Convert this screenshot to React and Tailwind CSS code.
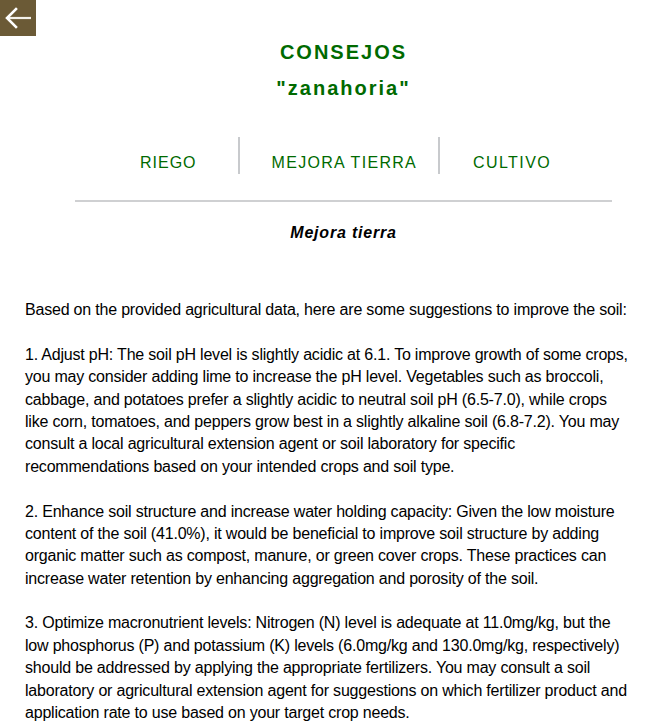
import React from "react";

const advice = `Based on the provided agricultural data, here are some suggestions to improve the soil:

1. Adjust pH: The soil pH level is slightly acidic at 6.1. To improve growth of some crops, you may consider adding lime to increase the pH level. Vegetables such as broccoli, cabbage, and potatoes prefer a slightly acidic to neutral soil pH (6.5-7.0), while crops like corn, tomatoes, and peppers grow best in a slightly alkaline soil (6.8-7.2). You may consult a local agricultural extension agent or soil laboratory for specific recommendations based on your intended crops and soil type.

2. Enhance soil structure and increase water holding capacity: Given the low moisture content of the soil (41.0%), it would be beneficial to improve soil structure by adding organic matter such as compost, manure, or green cover crops. These practices can increase water retention by enhancing aggregation and porosity of the soil.

3. Optimize macronutrient levels: Nitrogen (N) level is adequate at 11.0mg/kg, but the low phosphorus (P) and potassium (K) levels (6.0mg/kg and 130.0mg/kg, respectively) should be addressed by applying the appropriate fertilizers. You may consult a soil laboratory or agricultural extension agent for suggestions on which fertilizer product and application rate to use based on your target crop needs.`;

function BackButton() {
  return (
    <button className="w-9 h-9 shrink-0 bg-[#6b5a36] flex items-center justify-center">
      <svg width="36" height="36" viewBox="0 0 36 36" fill="none">
        <path d="M7 18H31" stroke="#f4f1ea" strokeWidth="2.2" />
        <path d="M16 9L7 18L16 27" stroke="#ffffff" strokeWidth="2.6" strokeLinecap="square" />
      </svg>
    </button>
  );
}

function Tabs() {
  return (
    <div className="flex items-start h-[37px] mt-[31px] pl-[100px] text-[#006a00] text-base tracking-[1px]">
      <span className="mt-[14px] leading-6">RIEGO</span>
      <div className="w-[2px] h-[37px] bg-[#c8cacd] ml-[41px]"></div>
      <span className="mt-[14px] leading-6 ml-[32px] tracking-[1.3px]">MEJORA TIERRA</span>
      <div className="w-[2px] h-[37px] bg-[#c8cacd] ml-[21px]"></div>
      <span className="mt-[14px] leading-6 ml-[33px] tracking-[1.4px]">CULTIVO</span>
    </div>
  );
}

export default function App() {
  return (
    <div className="min-h-screen bg-white font-['Liberation_Sans',Arial,sans-serif] text-black">
      <div className="flex">
        <BackButton />
        <div className="flex-1 ml-1 flex flex-col">
          <div className="mt-[34px] text-center text-[#006a00] font-bold text-[20px] leading-[36px] tracking-[2px]">
            <div>CONSEJOS</div>
            <div>"zanahoria"</div>
          </div>
          <Tabs />
          <div className="h-[2px] bg-[#cfd0d2] mx-[35px] mt-[26px]"></div>
          <h2 className="mt-[19px] text-center font-bold italic text-base leading-6 tracking-[0.8px]">Mejora tierra</h2>
        </div>
      </div>
      <p className="mt-[54px] pl-[25px] pr-[16px] pb-4 text-base leading-[1.4] tracking-[-0.2px] whitespace-pre-line">
        {advice}
      </p>
    </div>
  );
}
